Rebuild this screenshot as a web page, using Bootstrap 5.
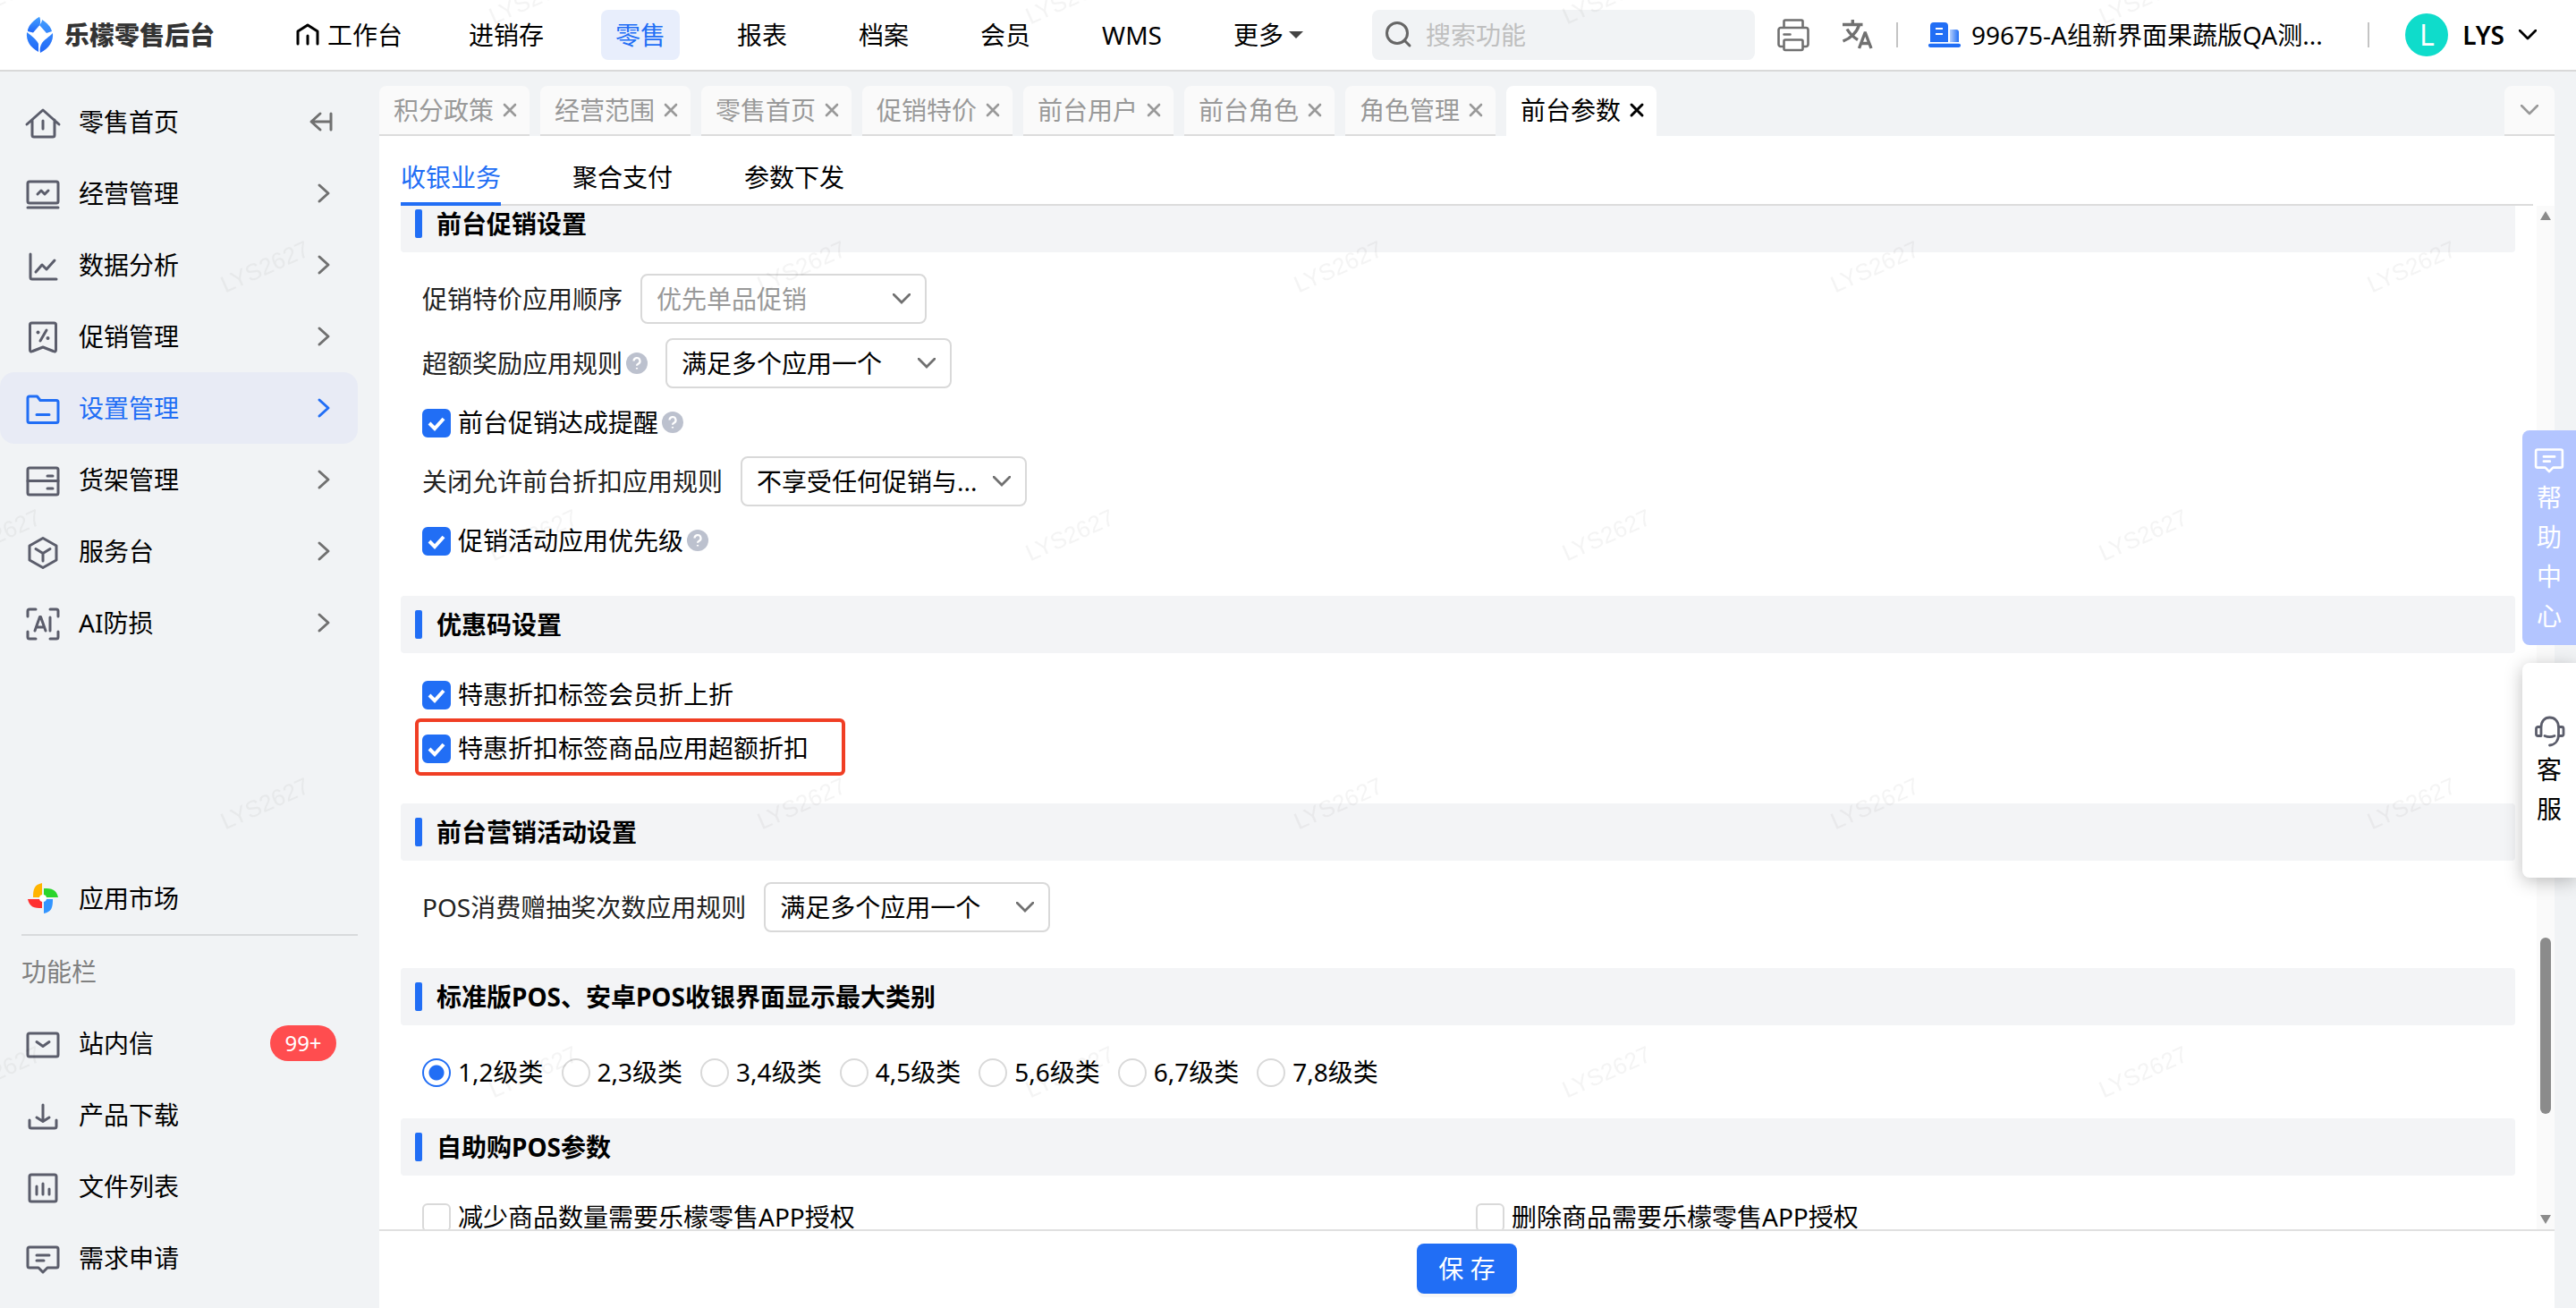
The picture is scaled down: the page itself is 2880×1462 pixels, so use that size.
<!DOCTYPE html>
<html lang="zh-CN">
<head>
<meta charset="utf-8">
<meta name="viewport" content="width=device-width, initial-scale=1">
<title>乐檬零售后台</title>
<link href="https://cdn.jsdelivr.net/npm/bootstrap@5.3.0/dist/css/bootstrap.min.css" rel="stylesheet">
<style>
:root { --brand: #216ef5; --line: #d9d9d9; --shell: #f1f3f5; }
body { font-family: "Noto Sans", "Noto Sans CJK SC", sans-serif; font-size: 28px; line-height: 44px; color: #000; background: var(--shell); }
a { color: inherit; text-decoration: none; }
svg { flex: none; overflow: visible; }
.ico { fill: none; stroke: currentColor; stroke-linecap: round; stroke-linejoin: round; }

/* top bar */
.topbar { height: 80px; padding: 0 44px 0 30px; background: #fff; border-bottom: 2px solid var(--line); }
.brand-name { margin-left: 12px; color: #333; font-weight: 900; }
.home-link { margin-left: 76px; margin-right: 42px; padding: 6px 16px; gap: 10px; }
.topnav { gap: 48px; }
.topnav .nav-link { padding: 6px 16px; color: #000; border-radius: 8px; }
.topnav .nav-link.active { background: #e8eefc; color: var(--brand); }
.caret-down { border: 8px solid transparent; border-top-color: #444; border-bottom: 0; margin-left: 6px; }
.finder { flex: 0 0 428px; height: 56px; margin-left: 61px; padding: 0 14px; gap: 16px; background: var(--shell); border-radius: 8px; color: #666; }
.finder input { border: 0; background: none; outline: 0; width: 100%; padding: 0; }
.finder input::placeholder { color: #bfbfbf; opacity: 1; }
.tool { border: 0; background: none; padding: 0; color: #707070; display: flex; }
.tools { gap: 36px; margin: 0 25px; }
.rule-v { width: 2px; height: 28px; background: #c4c4c4; }
.org { margin-left: 34px; gap: 12px; }
.account { gap: 16px; }
.avatar { width: 48px; height: 48px; border-radius: 50%; background: #0fdccb; color: #fff; font-size: 32px; }

/* side bar */
.side { flex: 0 0 424px; padding: 16px 24px 16px 0; }
.side-item { height: 80px; padding: 0 24px; gap: 16px; border-radius: 16px; color: #000; }
.side-item .ico { stroke-width: 3; color: #5b5d6b; }
.side-item .chev { margin-left: auto; color: #707070; }
.side-item.active { background: #e8ebf5; color: var(--brand); }
.side-item.active .ico { color: var(--brand); }
.side-rule { height: 2px; margin-left: 24px; background: #d8dadc; }
.side-head { height: 80px; padding: 18px 24px; color: #808080; }
.count { margin-left: auto; min-width: 74px; height: 40px; border-radius: 20px; background: #ff4d4f; color: #fff; font-size: 24px; line-height: 40px; text-align: center; }

/* page tabs */
.tabs { padding-top: 16px; gap: 12px; }
.ptab { height: 56px; padding: 0 12px 0 16px; gap: 8px; background: #fafafa; border-bottom: 2px solid #dcdcdc; border-radius: 8px 8px 0 0; color: #999; }
.ptab.active { background: #fff; border-color: #fff; color: #000; }
.ptab button { border: 0; padding: 0; background: none; color: inherit; display: flex; }
.ptab-more { padding: 0 18px; }

/* work area */
.work { margin-right: 24px; }
.subtabs { margin: 0 24px; padding-top: 24px; gap: 80px; border-bottom: 2px solid #dcdcdc; }
.subtabs a { padding-bottom: 6px; border-bottom: 4px solid transparent; margin-bottom: -2px; }
.subtabs a.active { color: var(--brand); border-color: var(--brand); }
.scroller { padding: 0 24px; overflow: hidden; }
.form-area { margin-top: -12px; }
.sect { height: 64px; margin: 0; padding: 0 16px; background: #f3f4f6; border-radius: 4px; font-size: 28px; font-weight: 700; line-height: 44px; gap: 16px; }
.sect::before { content: ""; width: 8px; height: 32px; border-radius: 2px; background: var(--brand); }
.fields { padding: 24px 0 40px 24px; gap: 16px; }
.field { color: #222; gap: 20px; }
.field .form-select { width: 320px; height: 56px; padding: 0 48px 0 16px; border: 2px solid var(--line); border-radius: 8px; font-size: 28px; line-height: 44px; color: #000; background: #fff url("data:image/svg+xml,%3Csvg xmlns='http://www.w3.org/2000/svg' viewBox='0 0 20 12'%3E%3Cpath d='M1 1l9 9 9-9' fill='none' stroke='%23707070' stroke-width='2.8' stroke-linecap='round'/%3E%3C/svg%3E") no-repeat right 16px center / 20px 12px; }
.field .form-select:disabled { color: #999; opacity: 1; }
.tip { fill: #bcc1ce; }
.tick { gap: 8px; min-height: 44px; }
.tick .form-check-input { flex: none; width: 32px; height: 32px; margin: 2px 0 0; border: 2px solid var(--line); background-color: #fff; }
.tick .form-check-input[type=checkbox] { border-radius: 6px; }
.tick .form-check-input:checked { border-color: var(--brand); }
.tick .form-check-input[type=checkbox]:checked { background-color: var(--brand); background-image: url("data:image/svg+xml,%3Csvg xmlns='http://www.w3.org/2000/svg' viewBox='0 0 28 28'%3E%3Cpath d='M6 14l6 6L22 9' fill='none' stroke='%23fff' stroke-width='4'/%3E%3C/svg%3E"); }
.tick .form-check-input[type=radio]:checked { background-image: radial-gradient(circle, var(--brand) 8px, #fff 9px); }
.choices { height: 56px; gap: 20px; }
.callout::after { content: ""; position: absolute; inset: -11px -41px -9px -8px; border: 4px solid #f03e24; border-radius: 6px; }
.pairs { margin-right: -16px; }
.track { flex: 0 0 20px; padding: 6px 0; background: #fafafa; }
.thumb { width: 12px; border-radius: 6px; background: #8b8b8b; }
.foot { height: 88px; padding-top: 14px; border-top: 2px solid #e0e0e0; }
.foot .btn { height: 56px; padding: 0 24px; border: 0; border-radius: 8px; background: var(--brand); font-size: 28px; line-height: 44px; box-shadow: 0 4px 0 rgba(0,0,0,.03); }

/* floating helpers */
.floaters { position: absolute; right: 0; top: 481px; gap: 20px; }
.floater { width: 60px; height: 240px; border-radius: 8px 0 0 8px; text-align: center; }
.floater span { width: 28px; }
.help { background: #b3c5ff; color: #fff; }
.service { background: #fff; box-shadow: 0 4px 20px rgba(0,0,0,.25); }
.service .ico { color: #5b5d6b; }
.watermark { position: absolute; inset: 0; width: 100%; height: 100%; pointer-events: none; }
</style>
<script src="https://cdn.jsdelivr.net/npm/bootstrap@5.3.0/dist/js/bootstrap.bundle.min.js"></script>
</head>
<body class="vh-100 d-flex flex-column overflow-hidden position-relative">
<svg width="0" height="0" class="position-absolute" aria-hidden="true">
  <defs>
    <symbol id="chev" viewBox="0 0 24 24"><path d="M5 3l10 9-10 9"/></symbol>
    <symbol id="close" viewBox="0 0 20 20"><path d="M4 4l12 12M16 4L4 16"/></symbol>
    <symbol id="down" viewBox="0 0 20 12"><path d="M1 1l9 9 9-9"/></symbol>
    <symbol id="tip" viewBox="0 0 24 24"><circle cx="12" cy="12" r="12"/><path d="M8.5 9.5a3.5 3.5 0 1 1 5 3.2c-1 .5-1.500 1-1.500 2M12 17v1.600" fill="none" stroke="#fff" stroke-width="2.2"/></symbol>
    <symbol id="note" viewBox="0 0 48 48"><path d="M9 12h30a2 2 0 0 1 2 2v19a2 2 0 0 1-2 2H29l-5 5-5-5H9a2 2 0 0 1-2-2V14a2 2 0 0 1 2-2zM17 21h14M17 27h8"/></symbol>
    <linearGradient id="g1" x1="0" y1="0" x2="0" y2="1"><stop offset="0" stop-color="#45a0ff"/><stop offset="1" stop-color="#1f66f7"/></linearGradient>
    <linearGradient id="g2"><stop offset="0" stop-color="#b5cffc"/><stop offset="1" stop-color="#216ef5"/></linearGradient>
  </defs>
</svg>

<header class="topbar d-flex align-items-center flex-shrink-0">
  <a href="#" class="d-flex align-items-center text-nowrap">
    <svg width="30" height="40" viewBox="0 0 30 40"><path fill="url(#g1)" d="M14 0C15 3 14 6 7 17L1 15C3 9 7 4 14 0zM17 3C23 7 27 11 28 16L22 18 14 9C16 7 17 5 17 3zM0 17C3 19 11 25 13 30V39C4 34-1 27 0 17zM29 18C30 27 25 35 15 40 14 36 15 32 17 29 20 25 24 23 29 18z"/><path fill="url(#g1)" d="M14 0C4 6 1 12 1 16L7 17.500 14 9.500C16 6 15 2 14 0z"/></svg>
    <span class="brand-name">乐檬零售后台</span>
  </a>
  <a href="#" class="home-link d-flex align-items-center text-nowrap">
    <svg class="ico" width="24" height="24" viewBox="0 0 24 24" stroke-width="3"><path d="M1 22V8l11-7 11 7v14M12 13v9"/></svg>工作台
  </a>
  <nav aria-label="主导航">
    <ul class="nav topnav flex-nowrap text-nowrap">
      <li><a class="nav-link" href="#">进销存</a></li>
      <li><a class="nav-link active" aria-current="page" href="#">零售</a></li>
      <li><a class="nav-link" href="#">报表</a></li>
      <li><a class="nav-link" href="#">档案</a></li>
      <li><a class="nav-link" href="#">会员</a></li>
      <li><a class="nav-link" href="#">WMS</a></li>
      <li><a class="nav-link d-flex align-items-center" href="#">更多<span class="caret-down"></span></a></li>
    </ul>
  </nav>
  <div class="finder d-flex align-items-center">
    <svg class="ico" width="30" height="30" viewBox="0 0 30 30" stroke-width="3"><circle cx="14" cy="13" r="11.500"/><path d="M22 21l6 6"/></svg>
    <input type="search" placeholder="搜索功能" aria-label="搜索功能">
  </div>
  <div class="tools d-flex align-items-center">
    <button class="tool" type="button" aria-label="打印"><svg class="ico" width="36" height="36" viewBox="0 0 36 36" stroke-width="2.600"><path d="M7.500 10V3a1.500 1.500 0 0 1 1.500-1.500h18A1.500 1.500 0 0 1 28.500 3v7M7.500 31H4a2.500 2.500 0 0 1-2.500-2.500v-16A2.500 2.500 0 0 1 4 10h28a2.500 2.500 0 0 1 2.500 2.500v16A2.500 2.500 0 0 1 32 31h-3.500M7.500 25A1.500 1.500 0 0 1 9 23.500h18a1.500 1.500 0 0 1 1.500 1.500v8.500a1.500 1.500 0 0 1-1.500 1.500H9a1.500 1.500 0 0 1-1.500-1.500zM7.500 17.500h7"/></svg></button>
    <button class="tool" type="button" aria-label="语言"><svg width="36" height="36" viewBox="0 0 36 36" fill="none" stroke="currentColor" stroke-width="3.400"><path d="M1 6.500h22.500M12.300 1v5.500M19.500 7C17 15 10 22 1.500 25M6 11.500c3 5 7 9 12 12M19.500 33l6.500-17h.500l6.500 17M21.500 27.500h10"/></svg></button>
  </div>
  <span class="rule-v"></span>
  <a href="#" class="org d-flex align-items-center text-nowrap">
    <svg width="36" height="30" viewBox="0 0 36 30"><path fill="#216ef5" d="M2 23V5a4 4 0 0 1 4-4h12a4 4 0 0 1 4 4v18zM2 24.700h32a2 2 0 0 1 0 4.300H2a2 2 0 0 1 0-4.300z"/><path fill="url(#g2)" d="M24 9h7a3 3 0 0 1 3 3v11H24z"/><path stroke="#fff" stroke-width="2.200" d="M8 8h8M8 14h8"/></svg>
    99675-A组新界面果蔬版QA测...
  </a>
  <span class="rule-v ms-auto me-3"></span>
  <a href="#" class="account d-flex align-items-center ms-4">
    <span class="avatar d-flex align-items-center justify-content-center">L</span>
    <span class="fw-semibold">LYS</span>
    <svg class="ico" width="20" height="12" stroke-width="2.800"><use href="#down"/></svg>
  </a>
</header>

<div class="d-flex flex-grow-1 overflow-hidden">
  <nav class="side d-flex flex-column" aria-label="侧边栏">
    <a href="#" class="side-item d-flex align-items-center"><svg class="ico" width="48" height="48"><path d="M6 27l18-16 18 16M12 22v17a2 2 0 0 0 2 2h21a2 2 0 0 0 2-2V22M24 23v9"/></svg>零售首页<svg class="ico chev" width="24" height="24"><path d="M6 3l-10 9 10 9M-3 12h21M18 3v18"/></svg></a>
    <a href="#" class="side-item d-flex align-items-center"><svg class="ico" width="48" height="48"><rect x="7" y="11" width="34" height="24" rx="2"/><path d="M7 40h34M18 25l4-4 4 4 4-4"/></svg>经营管理<svg class="ico chev" width="24" height="24"><use href="#chev"/></svg></a>
    <a href="#" class="side-item d-flex align-items-center"><svg class="ico" width="48" height="48"><path d="M10 12v26a2 2 0 0 0 2 2h27M16 32l7-8 5 5 9-10"/></svg>数据分析<svg class="ico chev" width="24" height="24"><use href="#chev"/></svg></a>
    <a href="#" class="side-item d-flex align-items-center"><svg class="ico" width="48" height="48"><path d="M9.500 11a2 2 0 0 1 2-2h25a2 2 0 0 1 2 2v28c0 2-1 2.500-3 1.500L24 36l-11.500 4.500c-2 1-3 .5-3-1.500zM28 17l-7 12"/><g fill="currentColor" stroke="none"><circle cx="18.500" cy="19.500" r="2"/><circle cx="29.500" cy="26" r="2"/></g></svg>促销管理<svg class="ico chev" width="24" height="24"><use href="#chev"/></svg></a>
    <a href="#" class="side-item active d-flex align-items-center" aria-current="page"><svg class="ico" width="48" height="48"><path d="M9 11h8.500l3.500 4.500h18a2 2 0 0 1 2 2V38.500a2 2 0 0 1-2 2H9a2 2 0 0 1-2-2V13a2 2 0 0 1 2-2zM17 31.500h14"/></svg>设置管理<svg class="ico chev" width="24" height="24"><use href="#chev"/></svg></a>
    <a href="#" class="side-item d-flex align-items-center"><svg class="ico" width="48" height="48"><rect x="7" y="11" width="34" height="30" rx="2"/><path d="M7 25.500h34M29 20h6M29 34h6"/></svg>货架管理<svg class="ico chev" width="24" height="24"><use href="#chev"/></svg></a>
    <a href="#" class="side-item d-flex align-items-center"><svg class="ico" width="48" height="48"><path d="M24 9.500l15 8.500v16l-15 8.500L9 34V18zM16 21.500l8 5 8-5M24 26.500V35"/></svg>服务台<svg class="ico chev" width="24" height="24"><use href="#chev"/></svg></a>
    <a href="#" class="side-item d-flex align-items-center"><svg class="ico" width="48" height="48"><path d="M7 17v-6a2 2 0 0 1 2-2h7M32 9h7a2 2 0 0 1 2 2v6M41 34v6a2 2 0 0 1-2 2h-7M16 42H9a2 2 0 0 1-2-2v-6M15 33l5.500-15.500h1L27 33M17 29h8M32 18v15"/></svg>AI防损<svg class="ico chev" width="24" height="24"><use href="#chev"/></svg></a>

    <a href="#" class="side-item d-flex align-items-center mt-auto"><svg width="48" height="48"><path fill="#ffb400" d="M23 7v16H13c0-9 1-14 10-16z"/><path fill="#2bd52b" d="M25 13c9 0 14 1 16 10H25z"/><path fill="#ff3030" d="M7 25h16v10c-9 0-14-1-16-10z"/><path fill="#3395ff" d="M25 25h10c0 9-1 14-10 16z"/><circle cx="24" cy="24" r="4" fill="#fff"/></svg>应用市场</a>
    <div class="side-rule"></div>
    <div class="side-head">功能栏</div>
    <a href="#" class="side-item d-flex align-items-center"><svg class="ico" width="48" height="48"><rect x="7" y="13" width="34" height="26" rx="2"/><path d="M17 22.500l7 5 7-5"/></svg>站内信<span class="count">99+</span></a>
    <a href="#" class="side-item d-flex align-items-center"><svg class="ico" width="48" height="48"><path d="M24 13v18M17 27l7 4.500 7-4.500M9 30v7a2 2 0 0 0 2 2h26a2 2 0 0 0 2-2v-7"/></svg>产品下载</a>
    <a href="#" class="side-item d-flex align-items-center"><svg class="ico" width="48" height="48"><rect x="9" y="11" width="30" height="30" rx="2"/><path d="M17 24v9M24 21v12M31 27v6"/></svg>文件列表</a>
    <a href="#" class="side-item d-flex align-items-center"><svg class="ico" width="48" height="48"><use href="#note"/></svg>需求申请</a>
  </nav>

  <div class="work d-flex flex-column flex-grow-1 overflow-hidden">
    <div class="tabs d-flex text-nowrap">
      <div class="ptab d-flex align-items-center"><a href="#">积分政策</a><button type="button" aria-label="关闭"><svg class="ico" width="20" height="20" stroke-width="2.600"><use href="#close"/></svg></button></div>
      <div class="ptab d-flex align-items-center"><a href="#">经营范围</a><button type="button" aria-label="关闭"><svg class="ico" width="20" height="20" stroke-width="2.600"><use href="#close"/></svg></button></div>
      <div class="ptab d-flex align-items-center"><a href="#">零售首页</a><button type="button" aria-label="关闭"><svg class="ico" width="20" height="20" stroke-width="2.600"><use href="#close"/></svg></button></div>
      <div class="ptab d-flex align-items-center"><a href="#">促销特价</a><button type="button" aria-label="关闭"><svg class="ico" width="20" height="20" stroke-width="2.600"><use href="#close"/></svg></button></div>
      <div class="ptab d-flex align-items-center"><a href="#">前台用户</a><button type="button" aria-label="关闭"><svg class="ico" width="20" height="20" stroke-width="2.600"><use href="#close"/></svg></button></div>
      <div class="ptab d-flex align-items-center"><a href="#">前台角色</a><button type="button" aria-label="关闭"><svg class="ico" width="20" height="20" stroke-width="2.600"><use href="#close"/></svg></button></div>
      <div class="ptab d-flex align-items-center"><a href="#">角色管理</a><button type="button" aria-label="关闭"><svg class="ico" width="20" height="20" stroke-width="2.600"><use href="#close"/></svg></button></div>
      <div class="ptab active d-flex align-items-center"><a href="#" aria-current="page">前台参数</a><button type="button" aria-label="关闭"><svg class="ico" width="20" height="20" stroke-width="3"><use href="#close"/></svg></button></div>
      <div class="ptab ptab-more d-flex align-items-center ms-auto"><button type="button" aria-label="更多页签"><svg class="ico" width="20" height="12" stroke-width="2.600"><use href="#down"/></svg></button></div>
    </div>

    <main class="d-flex flex-column flex-grow-1 overflow-hidden bg-white">
      <nav class="subtabs d-flex flex-shrink-0" aria-label="参数分类">
        <a href="#" class="active" aria-current="page">收银业务</a><a href="#">聚合支付</a><a href="#">参数下发</a>
      </nav>
      <div class="d-flex flex-grow-1 overflow-hidden">
        <div class="scroller flex-grow-1">
          <form class="form-area">
            <h2 class="sect d-flex align-items-center">前台促销设置</h2>
            <div class="fields d-flex flex-column align-items-start">
              <div class="field d-flex align-items-center"><label for="s1">促销特价应用顺序</label><select id="s1" class="form-select" disabled><option>优先单品促销</option></select></div>
              <div class="field d-flex align-items-center"><div class="d-flex align-items-center gap-1"><label for="s2">超额奖励应用规则</label><svg class="tip" width="24" height="24"><use href="#tip"/></svg></div><select id="s2" class="form-select"><option>满足多个应用一个</option></select></div>
              <div class="tick d-flex align-items-center"><input class="form-check-input" type="checkbox" id="c1" checked><div class="d-flex align-items-center gap-1"><label for="c1">前台促销达成提醒</label><svg class="tip" width="24" height="24"><use href="#tip"/></svg></div></div>
              <div class="field d-flex align-items-center"><label for="s3">关闭允许前台折扣应用规则</label><select id="s3" class="form-select"><option>不享受任何促销与...</option></select></div>
              <div class="tick d-flex align-items-center"><input class="form-check-input" type="checkbox" id="c2" checked><div class="d-flex align-items-center gap-1"><label for="c2">促销活动应用优先级</label><svg class="tip" width="24" height="24"><use href="#tip"/></svg></div></div>
            </div>

            <h2 class="sect d-flex align-items-center">优惠码设置</h2>
            <div class="fields d-flex flex-column align-items-start">
              <div class="tick d-flex align-items-center"><input class="form-check-input" type="checkbox" id="c3" checked><label for="c3">特惠折扣标签会员折上折</label></div>
              <div class="tick callout position-relative d-flex align-items-center"><input class="form-check-input" type="checkbox" id="c4" checked><label for="c4">特惠折扣标签商品应用超额折扣</label></div>
            </div>

            <h2 class="sect d-flex align-items-center">前台营销活动设置</h2>
            <div class="fields d-flex flex-column align-items-start">
              <div class="field d-flex align-items-center"><label for="s4">POS消费赠抽奖次数应用规则</label><select id="s4" class="form-select"><option>满足多个应用一个</option></select></div>
            </div>

            <h2 class="sect d-flex align-items-center">标准版POS、安卓POS收银界面显示最大类别</h2>
            <div class="fields pb-4">
              <div class="choices d-flex align-items-center" role="radiogroup" aria-label="最大类别">
                <div class="tick d-flex align-items-center"><input class="form-check-input" type="radio" name="lv" id="r1" checked><label for="r1">1,2级类</label></div>
                <div class="tick d-flex align-items-center"><input class="form-check-input" type="radio" name="lv" id="r2"><label for="r2">2,3级类</label></div>
                <div class="tick d-flex align-items-center"><input class="form-check-input" type="radio" name="lv" id="r3"><label for="r3">3,4级类</label></div>
                <div class="tick d-flex align-items-center"><input class="form-check-input" type="radio" name="lv" id="r4"><label for="r4">4,5级类</label></div>
                <div class="tick d-flex align-items-center"><input class="form-check-input" type="radio" name="lv" id="r5"><label for="r5">5,6级类</label></div>
                <div class="tick d-flex align-items-center"><input class="form-check-input" type="radio" name="lv" id="r6"><label for="r6">6,7级类</label></div>
                <div class="tick d-flex align-items-center"><input class="form-check-input" type="radio" name="lv" id="r7"><label for="r7">7,8级类</label></div>
              </div>
            </div>

            <h2 class="sect d-flex align-items-center">自助购POS参数</h2>
            <div class="fields pairs">
              <div class="row g-0">
                <div class="col-6"><div class="tick d-flex align-items-center"><input class="form-check-input" type="checkbox" id="c5"><label for="c5">减少商品数量需要乐檬零售APP授权</label></div></div>
                <div class="col-6"><div class="tick d-flex align-items-center"><input class="form-check-input" type="checkbox" id="c6"><label for="c6">删除商品需要乐檬零售APP授权</label></div></div>
              </div>
            </div>
          </form>
        </div>
        <div class="track d-flex flex-column align-items-center" aria-hidden="true">
          <svg width="12" height="10"><path d="M6 0l6 10H0z" fill="#8b8b8b"/></svg>
          <div style="flex-grow:802"></div>
          <div class="thumb" style="flex-grow:197"></div>
          <div style="flex-grow:113"></div>
          <svg width="12" height="10"><path d="M0 0h12L6 10z" fill="#8b8b8b"/></svg>
        </div>
      </div>
      <div class="foot d-flex justify-content-center align-items-start flex-shrink-0">
        <button type="button" class="btn btn-primary">保 存</button>
      </div>
    </main>
  </div>
</div>

<aside class="floaters d-flex flex-column" aria-label="帮助">
  <a href="#" class="floater help d-flex flex-column align-items-center justify-content-center"><svg class="ico" width="42" height="42" stroke-width="3"><use href="#note"/></svg><span>帮助中心</span></a>
  <a href="#" class="floater service d-flex flex-column align-items-center justify-content-center"><svg class="ico" width="42" height="42" viewBox="0 0 42 42" stroke-width="2.800"><path d="M12 17C12 10 16 6 21.500 6S31.500 10 31.500 17v8c0 7-4 11.500-10 12M16 26.500c3 1.300 8 1.300 11 0M12 16.500H8.500a2 2 0 0 0-2 2v6a2 2 0 0 0 2 2H12zM31.500 16.500H35a2 2 0 0 1 2 2v6a2 2 0 0 1-2 2h-3.500z"/></svg><span>客服</span></a>
</aside>

<svg class="watermark" aria-hidden="true">
  <defs>
    <pattern id="wm" x="146" y="148" width="600" height="600" patternUnits="userSpaceOnUse">
      <g font-family="Liberation Sans, sans-serif" font-size="26" text-anchor="middle" fill="#000" fill-opacity=".045">
        <text transform="translate(150 150) rotate(-24)" y="9">LYS2627</text>
        <text transform="translate(450 450) rotate(-24)" y="9">LYS2627</text>
      </g>
    </pattern>
  </defs>
  <rect width="100%" height="100%" fill="url(#wm)"/>
</svg>
</body>
</html>
